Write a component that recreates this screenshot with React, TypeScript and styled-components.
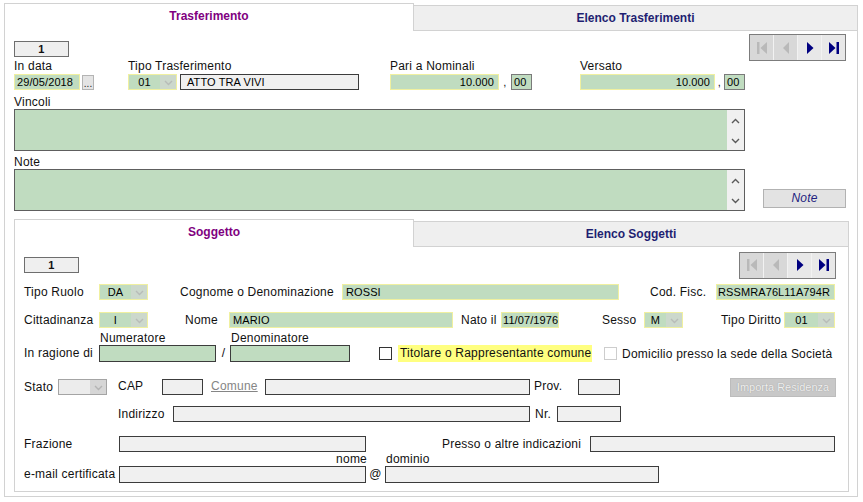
import React from "react";
import styled, { createGlobalStyle } from "styled-components";

const GlobalStyle = createGlobalStyle`
  html, body {
    margin: 0;
    padding: 0;
    background: #fff;
  }
  body {
    font-family: "Liberation Sans", Arial, sans-serif;
    font-size: 12px;
    letter-spacing: 0.22px;
    color: #111;
  }
`;

type Tone = "green" | "gray" | "greenDark" | "dec";

const tones: Record<Tone, { bg: string; border: string }> = {
	green: { bg: "#c0dcc0", border: "#f0f0a0" },
	gray: { bg: "#f0f0f0", border: "#3c3c3c" },
	greenDark: { bg: "#c0dcc0", border: "#3c3c3c" },
	dec: { bg: "#c0dcc0", border: "#7a7a7a" },
};

function Chevron({ color, up }: { color: string; up?: boolean }) {
	return (
		<svg width="9" height="6" viewBox="0 0 9 6">
			<polyline
				points={up ? "1,5 4.5,1.5 8,5" : "1,1 4.5,4.5 8,1"}
				fill="none"
				stroke={color}
				strokeWidth="1.4"
			/>
		</svg>
	);
}

function NavIcon({ kind, on }: { kind: "first" | "prev" | "next" | "last"; on: boolean }) {
	const c = on ? "#000080" : "#b9b9b9";
	return (
		<svg width="12" height="14" viewBox="0 0 12 14">
			{kind === "first" && (
				<>
					<rect x="1" y="1" width="2.5" height="12" fill={c} />
					<polygon points="11,1 11,13 4.5,7" fill={c} />
				</>
			)}
			{kind === "prev" && <polygon points="9,1 9,13 3,7" fill={c} />}
			{kind === "next" && <polygon points="3,1 3,13 9.5,7" fill={c} />}
			{kind === "last" && (
				<>
					<polygon points="1,1 1,13 7.5,7" fill={c} />
					<rect x="8.5" y="1" width="2.5" height="12" fill={c} />
				</>
			)}
		</svg>
	);
}

function Nav() {
	return (
		<NavGroup>
			<NavBtn $on={false}>
				<NavIcon kind="first" on={false} />
			</NavBtn>
			<NavBtn $on={false}>
				<NavIcon kind="prev" on={false} />
			</NavBtn>
			<NavBtn $on>
				<NavIcon kind="next" on />
			</NavBtn>
			<NavBtn $on>
				<NavIcon kind="last" on />
			</NavBtn>
		</NavGroup>
	);
}

function Combo({ w, value, gray }: { w: number; value?: string; gray?: boolean }) {
	return (
		<ComboBox $w={w} $gray={gray}>
			<ComboValue>{value}</ComboValue>
			<ComboArrow $gray={gray}>
				<Chevron color={gray ? "#b4b4b4" : "#b8bcb8"} />
			</ComboArrow>
		</ComboBox>
	);
}

function TextArea() {
	return (
		<AreaBox>
			<AreaScroll>
				<Chevron color="#5a5a5a" up />
				<Chevron color="#5a5a5a" />
			</AreaScroll>
		</AreaBox>
	);
}

export default function App() {
	return (
		<Page>
			<GlobalStyle />
			<Panel>
				<TabBar>
					<Tab $active $w={410}>
						Trasferimento
					</Tab>
					<Tab>Elenco Trasferimenti</Tab>
				</TabBar>
				<Body>
					<TopGrid>
						<LeftCol>
							<RecordBox $mt={7}>1</RecordBox>
							<FieldRow>
								<FieldGroup $w={114}>
									<FieldLabel>In data</FieldLabel>
									<InputLine>
										<Field $tone="green" $w={66}>
											29/05/2018
										</Field>
										<DotsBtn>...</DotsBtn>
									</InputLine>
								</FieldGroup>
								<FieldGroup $w={262}>
									<FieldLabel>Tipo Trasferimento</FieldLabel>
									<InputLine>
										<Combo w={49} value="01" />
										<Field $tone="gray" $w={179} $ml={3} $pl={6}>
											ATTO TRA VIVI
										</Field>
									</InputLine>
								</FieldGroup>
								<FieldGroup $w={190}>
									<FieldLabel>Pari a Nominali</FieldLabel>
									<InputLine>
										<Field $tone="green" $w={109} $right>
											10.000
										</Field>
										<Comma $w={12}>,</Comma>
										<Field $tone="dec" $w={21}>
											00
										</Field>
									</InputLine>
								</FieldGroup>
								<FieldGroup>
									<FieldLabel>Versato</FieldLabel>
									<InputLine>
										<Field $tone="green" $w={135} $right>
											10.000
										</Field>
										<Comma $w={9}>,</Comma>
										<Field $tone="dec" $w={21}>
											00
										</Field>
									</InputLine>
								</FieldGroup>
							</FieldRow>
							<AreaLabel $mt={6}>Vincoli</AreaLabel>
							<TextArea />
							<AreaLabel $mt={5}>Note</AreaLabel>
							<TextArea />
						</LeftCol>
						<RightCol>
							<Nav />
							<NoteBtn>Note</NoteBtn>
						</RightCol>
					</TopGrid>

					<InnerPanel>
						<TabBar>
							<Tab $active $w={400}>
								Soggetto
							</Tab>
							<Tab>Elenco Soggetti</Tab>
						</TabBar>
						<InnerBody>
							<HeadRow>
								<RecordBox>1</RecordBox>
								<Nav />
							</HeadRow>

							<Row $mt={6}>
								<Lbl $w={75}>Tipo Ruolo</Lbl>
								<Combo w={49} value="DA" />
								<Lbl $ml={32} $w={162}>
									Cognome o Denominazione
								</Lbl>
								<Field $tone="green" $w={277} $pl={3}>
									ROSSI
								</Field>
								<Lbl $ml={31} $w={66}>
									Cod. Fisc.
								</Lbl>
								<Field $tone="green" $w={119} $pl={1}>
									RSSMRA76L11A794R
								</Field>
							</Row>

							<Row $mt={12}>
								<Lbl $w={75}>Cittadinanza</Lbl>
								<Combo w={49} value="I" />
								<Lbl $ml={37} $w={44}>
									Nome
								</Lbl>
								<Field $tone="green" $w={224} $pl={3}>
									MARIO
								</Field>
								<Lbl $ml={8} $w={40}>
									Nato il
								</Lbl>
								<Field $tone="green" $w={58} $pl={1}>
									11/07/1976
								</Field>
								<Lbl $ml={43} $w={42}>
									Sesso
								</Lbl>
								<Combo w={39} value="M" />
								<Lbl $ml={38} $w={63}>
									Tipo Diritto
								</Lbl>
								<Combo w={51} value="01" />
							</Row>

							<StackRow $mt={4}>
								<Lbl $w={75} $lh={17}>
									In ragione di
								</Lbl>
								<Stack $w={118}>
									<StackLabel>Numeratore</StackLabel>
									<Field $tone="greenDark" $w={117} $h={17} />
								</Stack>
								<Lbl $w={13} $lh={17} $center>
									/
								</Lbl>
								<Stack $w={120}>
									<StackLabel>Denominatore</StackLabel>
									<Field $tone="greenDark" $w={120} $h={17} />
								</Stack>
								<CheckLine>
									<CheckBox $ml={29} />
									<Highlight>Titolare o Rappresentante comune</Highlight>
									<CheckBox $ml={12} $faded />
									<Lbl $ml={5}>Domicilio presso la sede della Società</Lbl>
								</CheckLine>
							</StackRow>

							<Row $mt={17}>
								<Lbl $w={34}>Stato</Lbl>
								<Combo w={49} gray />
								<Lbl $ml={11} $w={44} $top>
									CAP
								</Lbl>
								<Field $tone="gray" $w={41} />
								<LinkLbl $ml={8} $w={54}>
									Comune
								</LinkLbl>
								<Field $tone="gray" $w={265} />
								<Lbl $ml={4} $w={44} $top>
									Prov.
								</Lbl>
								<Field $tone="gray" $w={42} />
								<ImportBtn>Importa Residenza</ImportBtn>
							</Row>

							<Row $mt={11}>
								<Lbl $ml={94} $w={55}>
									Indirizzo
								</Lbl>
								<Field $tone="gray" $w={357} />
								<Lbl $ml={5} $w={22}>
									Nr.
								</Lbl>
								<Field $tone="gray" $w={64} />
							</Row>

							<Row $mt={14}>
								<Lbl $w={95}>Frazione</Lbl>
								<Field $tone="gray" $w={247} />
								<Lbl $ml={76} $w={148}>
									Presso o altre indicazioni
								</Lbl>
								<Field $tone="gray" $w={245} />
							</Row>

							<StackRow $mt={1}>
								<Lbl $w={95} $lh={17}>
									e-mail certificata
								</Lbl>
								<Stack $w={247}>
									<StackLabel $right>nome</StackLabel>
									<Field $tone="gray" $w={247} $h={17} />
								</Stack>
								<Lbl $w={19} $lh={17} $center>
									@
								</Lbl>
								<Stack $w={274}>
									<StackLabel>dominio</StackLabel>
									<Field $tone="gray" $w={274} $h={17} />
								</Stack>
							</StackRow>
						</InnerBody>
					</InnerPanel>
				</Body>
			</Panel>
		</Page>
	);
}

const Page = styled.div`
	width: 863px;
	height: 502px;
	box-sizing: border-box;
	padding: 3px 5px 0 4px;
`;

const Panel = styled.div`
	display: flex;
	flex-direction: column;
	width: 854px;
`;

const TabBar = styled.div`
	display: flex;
	height: 28px;
`;

const Tab = styled.div<{ $active?: boolean; $w?: number }>`
	box-sizing: border-box;
	display: flex;
	justify-content: center;
	padding-top: 5px;
	line-height: 14px;
	font-weight: bold;
	font-size: 12px;
	letter-spacing: 0;
	border: 1px solid #d2d2d2;
	${(p) =>
		p.$active
			? `
		width: ${p.$w}px;
		height: 28px;
		border-bottom: none;
		background: #fff;
		color: #800080;
	`
			: `
		flex: 1;
		height: 26px;
		margin-top: 2px;
		border-left: none;
		background: #efefef;
		color: #1f1f72;
	`}
`;

const Body = styled.div`
	border: 1px solid #d2d2d2;
	border-top: none;
	padding: 3px 8px 4px 9px;
`;

const TopGrid = styled.div`
	display: grid;
	grid-template-columns: 731px 1fr;
`;

const LeftCol = styled.div`
	display: flex;
	flex-direction: column;
`;

const RightCol = styled.div`
	display: flex;
	flex-direction: column;
	align-items: flex-end;
	justify-content: space-between;
	padding: 0 3px 3px 0;
`;

const RecordBox = styled.div<{ $mt?: number }>`
	box-sizing: border-box;
	width: 55px;
	height: 16px;
	margin-top: ${(p) => p.$mt ?? 0}px;
	background: #efefef;
	border: 1px solid #6e6e6e;
	font-size: 11px;
	font-weight: bold;
	line-height: 14px;
	text-align: center;
`;

const FieldRow = styled.div`
	display: flex;
	margin-top: 3px;
`;

const FieldGroup = styled.div<{ $w?: number }>`
	display: flex;
	flex-direction: column;
	flex: ${(p) => (p.$w ? `0 0 ${p.$w}px` : "1")};
`;

const FieldLabel = styled.div`
	height: 13px;
	line-height: 13px;
`;

const InputLine = styled.div`
	display: flex;
	align-items: center;
	margin-top: 1px;
`;

const Field = styled.div<{
	$w: number;
	$h?: number;
	$tone: Tone;
	$right?: boolean;
	$ml?: number;
	$pl?: number;
}>`
	flex: none;
	box-sizing: border-box;
	width: ${(p) => p.$w}px;
	height: ${(p) => p.$h ?? 16}px;
	margin-left: ${(p) => p.$ml ?? 0}px;
	display: flex;
	align-items: center;
	justify-content: ${(p) => (p.$right ? "flex-end" : "flex-start")};
	padding: ${(p) => (p.$right ? "0 4px 0 0" : `0 0 0 ${p.$pl ?? 2}px`)};
	font-size: 11px;
	letter-spacing: 0.1px;
	color: #000;
	white-space: nowrap;
	overflow: hidden;
	background: ${(p) => tones[p.$tone].bg};
	border: 1px solid ${(p) => tones[p.$tone].border};
`;

const DotsBtn = styled.div`
	box-sizing: border-box;
	width: 12px;
	height: 15px;
	margin-left: 2px;
	background: #e4e4e4;
	border: 1px solid #b4b4b4;
	font-size: 10px;
	letter-spacing: 0;
	line-height: 15px;
	text-align: center;
	color: #222;
`;

const Comma = styled.span<{ $w: number }>`
	flex: none;
	width: ${(p) => p.$w}px;
	text-align: center;
	font-size: 11px;
	line-height: 16px;
`;

const ComboBox = styled.div<{ $w: number; $gray?: boolean }>`
	flex: none;
	box-sizing: border-box;
	width: ${(p) => p.$w}px;
	height: 16px;
	display: flex;
	background: ${(p) => (p.$gray ? "#ececec" : "#c0dcc0")};
	border: 1px solid ${(p) => (p.$gray ? "#a4a4a4" : "#f0f0a0")};
`;

const ComboValue = styled.span`
	flex: 1;
	display: flex;
	align-items: center;
	justify-content: center;
	font-size: 11px;
	color: #000;
`;

const ComboArrow = styled.span<{ $gray?: boolean }>`
	flex: 0 0 16px;
	display: flex;
	align-items: center;
	justify-content: center;
	padding-top: 2px;
	background: ${(p) => (p.$gray ? "#d6d6d6" : "#ccd8cc")};
`;

const AreaLabel = styled.div<{ $mt: number }>`
	margin-top: ${(p) => p.$mt}px;
	height: 13px;
	line-height: 13px;
`;

const AreaBox = styled.div`
	box-sizing: border-box;
	height: 42px;
	display: flex;
	justify-content: flex-end;
	background: #c0dcc0;
	border: 1px solid #5e5e5e;
`;

const AreaScroll = styled.div`
	width: 17px;
	display: flex;
	flex-direction: column;
	align-items: center;
	justify-content: space-between;
	padding: 8px 0 6px;
	box-sizing: border-box;
	background: #f0f0f0;
`;

const NavGroup = styled.div`
	display: flex;
	height: 27px;
	box-sizing: border-box;
	border: 1px solid #7c7c7c;
`;

const NavBtn = styled.div<{ $on: boolean }>`
	width: 23px;
	display: flex;
	align-items: center;
	justify-content: center;
	background: ${(p) => (p.$on ? "#e8e8e8" : "#d8d8d8")};
	& + & {
		border-left: 1px solid #f2f2f2;
	}
`;

const NoteBtn = styled.div`
	box-sizing: border-box;
	width: 83px;
	height: 19px;
	background: #e3e3e3;
	border: 1px solid #b2b2b2;
	color: #1f1f80;
	font-style: italic;
	line-height: 17px;
	text-align: center;
`;

const InnerPanel = styled.div`
	margin-top: 8px;
	display: flex;
	flex-direction: column;
`;

const InnerBody = styled.div`
	border: 1px solid #d2d2d2;
	border-top: none;
	padding: 5px 12px 8px 9px;
`;

const HeadRow = styled.div`
	display: flex;
	align-items: center;
	justify-content: space-between;
	height: 26px;
`;

const Row = styled.div<{ $mt: number }>`
	display: flex;
	align-items: center;
	height: 16px;
	margin-top: ${(p) => p.$mt}px;
`;

const StackRow = styled.div<{ $mt: number }>`
	display: flex;
	align-items: flex-end;
	margin-top: ${(p) => p.$mt}px;
`;

const Stack = styled.div<{ $w: number }>`
	flex: 0 0 ${(p) => p.$w}px;
	display: flex;
	flex-direction: column;
`;

const StackLabel = styled.div<{ $right?: boolean }>`
	height: 13px;
	line-height: 13px;
	padding: ${(p) => (p.$right ? "0" : "0 0 0 1px")};
	text-align: ${(p) => (p.$right ? "right" : "left")};
	margin-right: ${(p) => (p.$right ? "-1px" : "0")};
`;

const Lbl = styled.span<{ $w?: number; $ml?: number; $lh?: number; $top?: boolean; $center?: boolean }>`
	flex: none;
	display: inline-block;
	${(p) => (p.$w ? `width: ${p.$w}px;` : "")}
	margin-left: ${(p) => p.$ml ?? 0}px;
	line-height: ${(p) => p.$lh ?? 14}px;
	white-space: nowrap;
	align-self: ${(p) => (p.$top ? "flex-start" : "auto")};
	text-align: ${(p) => (p.$center ? "center" : "left")};
`;

const LinkLbl = styled(Lbl)`
	color: #858585;
	text-decoration: underline;
	align-self: flex-start;
`;

const CheckLine = styled.div`
	display: flex;
	align-items: center;
	height: 17px;
`;

const CheckBox = styled.span<{ $ml: number; $faded?: boolean }>`
	flex: none;
	box-sizing: border-box;
	width: 13px;
	height: 13px;
	margin-left: ${(p) => p.$ml}px;
	background: #fff;
	border: 1px solid ${(p) => (p.$faded ? "#cdcdcd" : "#333")};
`;

const Highlight = styled.span`
	flex: none;
	box-sizing: border-box;
	width: 194px;
	height: 17px;
	margin-left: 6px;
	padding-left: 2px;
	line-height: 17px;
	background: #ffff80;
	white-space: nowrap;
`;

const ImportBtn = styled.div`
	flex: none;
	box-sizing: border-box;
	width: 106px;
	height: 19px;
	margin-left: auto;
	background: #c8c8c8;
	border: 1px solid #bcbcbc;
	color: #f0f0f0;
	text-shadow: 0 0 1px #8e8e8e;
	font-size: 11px;
	letter-spacing: 0;
	line-height: 17px;
	text-align: center;
`;
